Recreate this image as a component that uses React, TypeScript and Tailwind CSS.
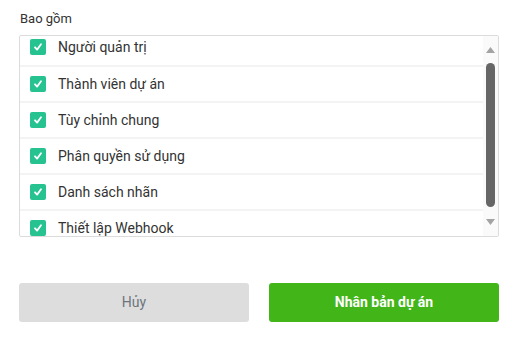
import React from "react";

const items = [
  "Người quản trị",
  "Thành viên dự án",
  "Tùy chỉnh chung",
  "Phân quyền sử dụng",
  "Danh sách nhãn",
  "Thiết lập Webhook",
];

function Check() {
  return (
    <div className="w-[16px] h-[16px] rounded-[2px] bg-[#26c28f] flex items-center justify-center shrink-0">
      <svg width="10" height="10" viewBox="0 0 10 10" fill="none">
        <path d="M2 5.3 L4.1 7.6 L8 2.2" stroke="white" strokeWidth="1.8" strokeLinecap="round" strokeLinejoin="round" />
      </svg>
    </div>
  );
}

export default function App() {
  return (
    <div className="w-[516px] h-[350px] bg-white pl-[19px] pr-[17px] pt-[11px]" style={{ fontFamily: "Roboto, 'Noto Sans', sans-serif" }}>
      <div className="text-[13px] text-[#333] leading-[16px] pl-[1px] mb-[8px]">Bao gồm</div>
      <div className="h-[202px] border border-[#dcdcdc] rounded-[2px] flex overflow-hidden">
        <div className="flex-1 overflow-hidden">
          <div className="-mt-[7px]">
            {items.map((t, i) => (
              <div
                key={t}
                className={`h-[36px] flex items-center pl-[10px] gap-[12px] ${i > 0 ? "border-t-2 border-[#f3f3f3]" : ""}`}
              >
                <Check />
                <span className="text-[14px] text-[#333]">{t}</span>
              </div>
            ))}
          </div>
        </div>
        <div className="w-[15px] bg-[#fafafa] flex flex-col items-center">
          <div className="h-[27px] flex items-center justify-center">
            <svg width="9" height="6" viewBox="0 0 9 6"><path d="M0 6 L4.5 0 L9 6 Z" fill="#a3a3a3" /></svg>
          </div>
          <div className="w-[9px] h-[144px] rounded-[5px] bg-[#666]" />
          <div className="flex-1 flex items-center justify-center">
            <svg width="9" height="6" viewBox="0 0 9 6"><path d="M0 0 L9 0 L4.5 6 Z" fill="#a3a3a3" /></svg>
          </div>
        </div>
      </div>
      <div className="flex gap-[20px] mt-[46px]">
        <button className="flex-1 h-[39px] rounded-[3px] bg-[#dddddd] text-[#6c757d] text-[14px]">Hủy</button>
        <button className="flex-1 h-[39px] rounded-[3px] bg-[#42b619] text-white font-bold text-[14px]">Nhân bản dự án</button>
      </div>
    </div>
  );
}
